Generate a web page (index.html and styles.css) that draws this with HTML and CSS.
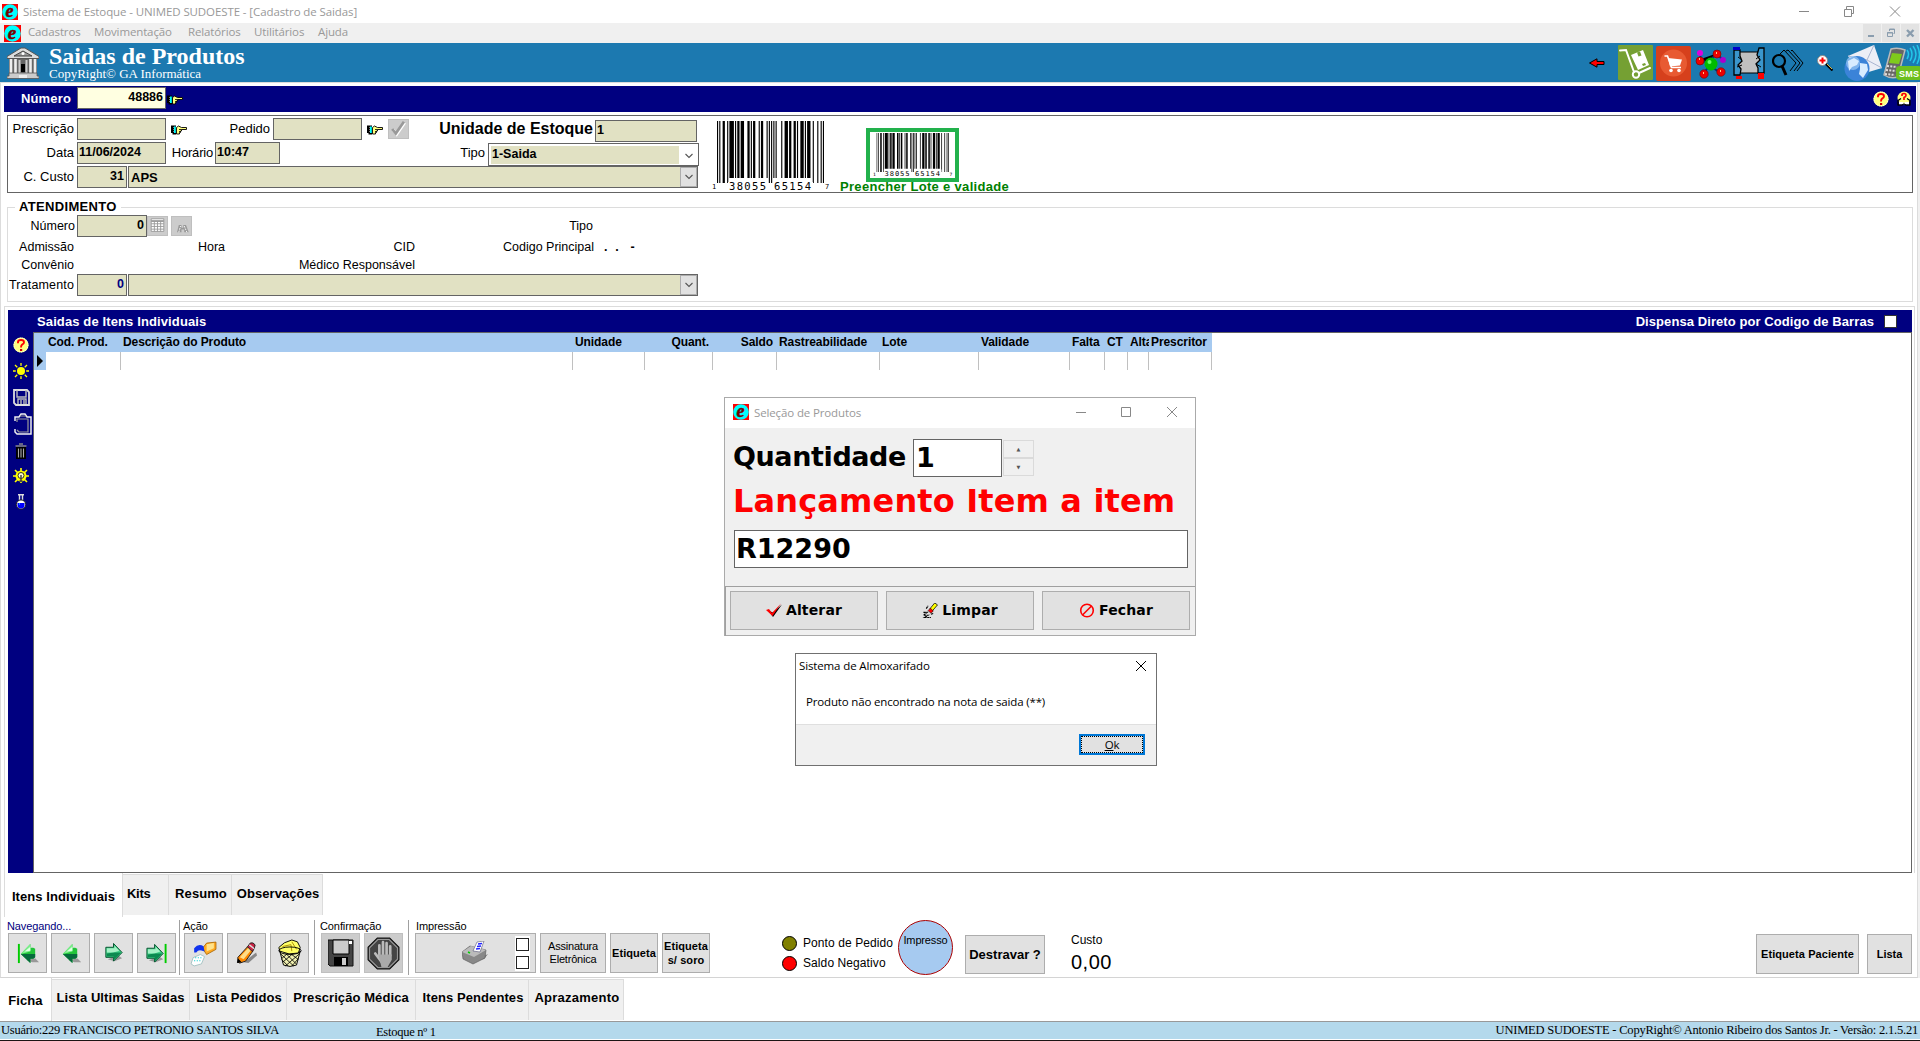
FILE: index.html
```html
<!DOCTYPE html>
<html lang="pt-BR">
<head>
<meta charset="utf-8">
<title>Sistema de Estoque</title>
<link rel="stylesheet" href="styles.css">
</head>
<body>
<svg class="defs" width="0" height="0">
  <symbol id="hand" viewBox="0 0 16 10"><path d="M0 .5h5v9H1.500V8H0z"/><path d="M2.500 2v6" stroke="#777" stroke-dasharray="1 1"/><path d="M3 1.500h1.800v6.500H3z" fill="#0ff"/><path d="M5.500 2.500l2-1.500 3 1.500h5v2h-5v1.500h-1v1.500h-1v1.500h-3z" fill="#ffff80" stroke="#000" stroke-width=".9"/><path d="M8 4.500h2.500M8 6.500h1.500" stroke="#000" stroke-width=".8"/></symbol>
  <symbol id="help" viewBox="0 0 16 16"><circle cx="8" cy="8" r="7.600" fill="#ffff80"/><circle cx="8" cy="8" r="7" fill="none" stroke="#fff" stroke-dasharray="1 1"/><path d="M5 6.300V5q0-2 3-2t3 2.200q0 1.500-1.600 2.200Q8 8.200 8 10.500" fill="none" stroke="#f00" stroke-width="1.900"/><rect x="7" y="12" width="2.200" height="2" fill="#c00"/></symbol>
  <symbol id="down" viewBox="0 0 10 6"><path d="M1.500 1l3.500 3.500L8.500 1" fill="none" stroke="#555" stroke-width="1.100"/></symbol>
  <symbol id="bars" viewBox="0 0 95 62" preserveAspectRatio="none"><path d="M0 0h1v62h-1zM2 0h1v62h-1zM5 0h2v62h-2zM9 0h1v62h-1zM11 0h4v57h-4zM16 0h1v57h-1zM18 0h2v57h-2zM21 0h3v57h-3zM27 0h2v57h-2zM30 0h1v57h-1zM32 0h2v57h-2zM37 0h1v57h-1zM39 0h2v57h-2zM44 0h1v57h-1zM46 0h1v62h-1zM48 0h1v62h-1zM50 0h1v57h-1zM52 0h1v57h-1zM57 0h1v57h-1zM60 0h3v57h-3zM64 0h2v57h-2zM68 0h2v57h-2zM71 0h1v57h-1zM74 0h3v57h-3zM78 0h1v57h-1zM80 0h3v57h-3zM85 0h1v62h-1zM89 0h1v62h-1zM92 0h1v62h-1zM94 0h1v62h-1z"/></symbol>
  <symbol id="arrow-l" viewBox="0 0 20 20"><path d="M7 17l6 2h7l-4-4z" fill="#999"/><path d="M1 10.500L11 0v4h3l2 1v9l-2 1.500h-3v4.500z" fill="#22c43a"/><path d="M1 10.500L11 0v8z" fill="#7df08d"/><path d="M1 10.500h15V14l-2 1.500h-3V20z" fill="#066b3c"/><path d="M5 8l6-5v4z" fill="#e0ffe4"/></symbol>
  <symbol id="arrow-r" viewBox="0 0 20 20"><path d="M3 17l7 2 8-3-4-3z" fill="#999"/><path d="M1 4.500h8V.500l9 9.500-9 9v-4H1z" fill="#3fcf86" stroke="#05512e"/><path d="M2 5.500h8V3l5 5-6 2H2z" fill="#a5f2c6"/><path d="M2 11l8-1h7l-8 8v-4H2z" fill="#0b8a50"/></symbol>
</svg>

<header class="titlebar">
  <svg class="i16" viewBox="0 0 16 16"><rect width="16" height="16" fill="#f00"/><circle cx="8" cy="8" r="7.800" fill="#0ff"/><text class="e-mark" x="3.500" y="13">e</text></svg>
  <span class="ui">Sistema de Estoque - UNIMED SUDOESTE - [Cadastro de Saidas]</span>
  <svg class="win-controls" viewBox="0 0 102 12"><path d="M0 6.500h10M45.500 4.500h7v7h-7zM47.500 4.500v-3h7v7h-2M91 1.500l10 10M101 1.500l-10 10" fill="none" stroke="#888"/></svg>
</header>
<nav class="menubar">
  <svg class="i17" viewBox="0 0 16 16"><rect width="16" height="16" fill="#f00"/><circle cx="8" cy="8" r="7.800" fill="#0ff"/><text class="e-mark" x="3.500" y="13">e</text></svg>
  <span class="ui m1">Cadastros</span><span class="ui m2">Movimentação</span><span class="ui m3">Relatórios</span><span class="ui m4">Utilitários</span><span class="ui m5">Ajuda</span>
  <div class="mdi"><svg viewBox="0 0 18 18"><path d="M5 12h6" stroke="#8a9dae" stroke-width="2"/></svg><svg viewBox="0 0 18 18"><path d="M5.500 8.500h5v4h-5zM5 9h6M7.500 7v-2h5v4.500h-1M7 5.500h6" fill="none" stroke="#8a9dae"/></svg><svg viewBox="0 0 18 18"><path d="M6 6l6.500 6.500M12.500 6L6 12.500" stroke="#8a9dae" stroke-width="2.400"/></svg></div>
</nav>
<section class="brand">
  <svg class="bank" viewBox="0 0 32 32"><path d="M0 9.500L14 1h4l14 8.500v2H0z" fill="#ddd" stroke="#555"/><path d="M7 9l9-5 9 5z" fill="#999" stroke="#444"/><circle cx="16" cy="6.500" r="1.500" fill="#fff"/><path d="M2 12h28v15H2z" fill="#666"/><path d="M14 17h4v8h-4z" fill="#000"/><path d="M4 12v15M8.500 12v15M23.500 12v15M28 12v15" stroke="#eee" stroke-width="2.600"/><path d="M12.500 13v13M19.500 13v13" stroke="#ccc" stroke-width="2"/><path d="M2 26h28v3h2v2.500H0V29h2z" fill="#ccc" stroke="#555" stroke-width=".8"/><path d="M12 28h8v3h-8z" fill="#eee"/></svg>
  <div class="brand-text"><h1>Saidas de Produtos</h1><p>CopyRight© GA Informática</p></div>
  <div class="brand-icons">
    <svg class="bi-arrow" viewBox="0 0 16 10"><path d="M.5 5L8 .8v2.700h7v3H8v2.700z" fill="#f00" stroke="#000"/></svg>
    <svg class="bi-truck" viewBox="0 0 35 35"><rect width="35" height="35" rx="1" fill="#75a033"/><path d="M2 5.500l6-.5 8 22M21 28l11-5" fill="none" stroke="#fff" stroke-width="2" stroke-linecap="round"/><circle cx="18" cy="29.500" r="3.200" fill="none" stroke="#fff" stroke-width="2"/><path d="M13 10l12-5 6 15-11 5z" fill="#fff"/><path d="M19 7.500l1.500 4 3-1-1.500-4zM24 19l3-1 1 2-3 1z" fill="#75a033"/></svg>
    <svg class="bi-cart" viewBox="0 0 35 35"><rect width="35" height="35" rx="2" fill="#d6401c"/><circle cx="17.500" cy="17" r="13.500" fill="#e85a32"/><path d="M8.500 10h3l4 11.500h9.500" fill="none" stroke="#fff" stroke-width="1.600"/><path d="M12 12l14 1.500-2 6-10 1z" fill="#fff"/><circle cx="15" cy="24.500" r="1.800" fill="#fff"/><circle cx="23" cy="24.500" r="1.800" fill="#fff"/></svg>
    <svg class="bi-mol" viewBox="0 0 32 30"><path d="M6 10l8 6 6-11M14 16l10 7M14 16l-5 9M5 3l1 9M22 5l6 6" stroke="#003080" stroke-width="2"/><circle cx="16" cy="15" r="6.500" fill="#0b0"/><circle cx="14.500" cy="13" r="2" fill="#6f6"/><g fill="#e00" stroke="#700" stroke-width=".6"><circle cx="5" cy="12" r="4"/><circle cx="22" cy="5" r="4"/><circle cx="9" cy="25" r="4.200"/><circle cx="26" cy="23" r="4.200"/></g><circle cx="5" cy="4" r="3" fill="#d0d"/><circle cx="28" cy="11" r="3" fill="#a0c"/><path d="M4 10h1M21 4h1M8 24h1M25 22h1" stroke="#fc8" stroke-width="2"/></svg>
    <svg class="bi-frame" viewBox="0 0 32 32"><path d="M5 5h22v21H5z" fill="#c0c0c0" stroke="#000"/><path d="M1 3h6v6l2 5-4 4 3 4-1 6H1zM26 1h5v25h-6v-5l-2-4 4-4-3-5z" fill="#3a96cc" stroke="#000" stroke-width="1.300"/><path d="M0 0h7v3H0z" fill="#00c"/><path d="M3 29h6v3H3zM25 26h6v6h-6z" fill="#f00"/><path d="M5 10l4 3M4 20l5-2M27 9l-4 3M28 20l-5-3" stroke="#000"/></svg>
    <svg class="bi-search" viewBox="0 0 32 27"><path d="M8 5l4-4 12 13-6 8M14 2l2-1 12 13-6 8M19 2l1-1 11 13-6 8" fill="none" stroke="#000" stroke-width="1"/><circle cx="7" cy="12" r="6" fill="none" stroke="#000" stroke-width="2.200"/><path d="M10 17l4 9" stroke="#000" stroke-width="3"/></svg>
    <svg class="bi-zoom" viewBox="0 0 16 16"><circle cx="5.500" cy="5.500" r="5" fill="#fff" stroke="#888"/><path d="M5.500 2.500v6M2.500 5.500h6" stroke="#f00" stroke-width="2"/><path d="M9 9l6.500 6.500" stroke="#000" stroke-width="2.200"/><path d="M10 9l5 5" stroke="#db4" stroke-width="1"/></svg>
    <svg class="bi-mail" viewBox="0 0 38 36"><path d="M4 11L30 0l8 23-20 6z" fill="#eceef6"/><path d="M4 11l19 4L30 0M23 15l15 8" fill="none" stroke="#a9b4d0"/><circle cx="13" cy="23.500" r="12.500" fill="#3b83d8"/><circle cx="9" cy="18" r="7" fill="#9cc9f6" opacity=".7"/><path d="M4 16l6-3 5 3-2 4-5 2-3 4zM16 18l7 1 1 6-5 8-4-4 1-5z" fill="#d8ecff"/></svg>
    <svg class="bi-sms" viewBox="0 0 38 36"><path d="M9 4q7-2 14 1l-7 27q-8 2-14-2z" fill="#666" stroke="#bbb" stroke-width="1.500"/><path d="M10 8l10 1-3 10-10-1z" fill="#7fcb1c"/><path d="M5 21l10 1M4 25l10 1M3 29l10 1" stroke="#ddd" stroke-width="2" stroke-dasharray="2 1.300"/><path d="M25 5q3 4 0 9M28 3q4 6 0 13M31 1q6 8 0 17M35 0q5 10 0 19" fill="none" stroke="#23c6e8" stroke-width="1.500"/><rect x="14" y="21" width="26" height="14" rx="4" fill="#6cc01e"/><text class="sms" x="17" y="32" textLength="20">SMS</text></svg>
  </div>
</section>

<main class="page">
  <div class="number-bar">
    <label class="lbl">Número</label>
    <div class="inp cream num">48886</div>
    <svg class="hand"><use href="#hand"/></svg>
    <svg class="i16 help-a"><use href="#help"/></svg>
    <svg class="i16 help-b" viewBox="0 0 16 16"><circle cx="8" cy="7" r="6.500" fill="#ffff80"/><path d="M2 14.500v-5l3-2M14 14.500v-5l-3-2M2 14h4l2-1.500 2 1.500h4" fill="none" stroke="#000" stroke-width="1.400"/><path d="M3 11h4l1 1 1-1h4v2.200h-3l-2-1-2 1H3z" fill="#fff"/><path d="M6 5V4q0-1.500 2-1.500T10 4.300Q10 6 8 6.500V9" fill="none" stroke="#f00" stroke-width="1.700"/></svg>
  </div>

  <section class="box">
    <div class="fields">
      <div class="row">
        <label class="lbl first">Prescrição</label><div class="inp w89"></div><svg class="hand h2"><use href="#hand"/></svg>
        <label class="lbl pedido">Pedido</label><div class="inp w89 after"></div><svg class="hand h2"><use href="#hand"/></svg>
        <div class="gbtn check"><svg viewBox="0 0 20 20"><path d="M4 11l4 5 9-13" fill="none" stroke="#fff" stroke-width="3"/><path d="M3 10l4 5 9-13" fill="none" stroke="#999" stroke-width="3"/></svg></div>
        <label class="lbl unidade">Unidade de Estoque</label><div class="inp w102">1</div>
      </div>
      <div class="row">
        <label class="lbl first">Data</label><div class="inp w89">11/06/2024</div>
        <label class="lbl horario">Horário</label><div class="inp w65">10:47</div>
        <label class="lbl tipo">Tipo</label>
        <div class="select"><span>1-Saida</span><svg><use href="#down"/></svg></div>
      </div>
      <div class="row">
        <label class="lbl first">C. Custo</label><div class="inp w50 num">31</div>
        <div class="inp combo"><span>APS</span><i><svg><use href="#down"/></svg></i></div>
      </div>
    </div>
    <svg class="barcode" viewBox="0 0 118 70"><use href="#bars" x="5" y="0" width="107" height="62"/><g class="digits"><rect x="16" y="61" width="40" height="9" fill="#fff"/><rect x="62" y="61" width="39" height="9" fill="#fff"/><text class="tiny" x="0" y="68">1</text><text x="17" y="69" textLength="37">38055</text><text x="62" y="69" textLength="37">65154</text><text class="tiny" x="113" y="68">7</text></g></svg>
    <div class="preencher">
      <div class="green"><svg viewBox="0 0 118 70" preserveAspectRatio="none"><use href="#bars" x="5" y="0" width="107" height="62"/><g class="digits"><rect x="16" y="58" width="40" height="12" fill="#fff"/><rect x="62" y="58" width="39" height="12" fill="#fff"/><text class="tiny" x="0" y="68">1</text><text x="17" y="69" textLength="37">38055</text><text x="62" y="69" textLength="37">65154</text><text class="tiny" x="113" y="68">7</text></g></svg></div>
      <span>Preencher Lote e validade</span>
    </div>
  </section>

  <section class="group">
    <h2 class="legend"><span>ATENDIMENTO</span></h2>
    <div class="row">
      <label class="lbl first">Número</label><div class="inp w70 num">0</div>
      <div class="gbtn"><svg viewBox="0 0 20 20"><path d="M3 2h14v14H3z" fill="#fff" stroke="#999"/><path d="M3 4.500h14" stroke="#999" stroke-width="2"/><path d="M3 7.500h14M3 10.500h14M3 13.500h14M6.500 5v11M10 5v11M13.500 5v11" stroke="#999"/></svg></div>
      <div class="gbtn bino"><svg viewBox="0 0 20 20"><path d="M5 17l2-8h3v3h2V9h3l3 8h-5v-3h-3v3z" fill="#999"/><path d="M7 17l2-7M13 10l3 7" stroke="#fff" stroke-dasharray="2 1"/></svg></div>
      <label class="lbl g-tipo">Tipo</label>
    </div>
    <div class="trow r1"><label class="lbl first">Admissão</label><label class="lbl g-hora">Hora</label><label class="lbl g-cid">CID</label><label class="lbl g-cod">Codigo Principal</label><span class="dots">.&nbsp; .&nbsp;&nbsp; -</span></div>
    <div class="trow"><label class="lbl first">Convênio</label><label class="lbl g-med">Médico Responsável</label></div>
    <div class="row"><label class="lbl first trat">Tratamento</label><div class="inp w50 num navy">0</div><div class="inp combo"><span></span><i><svg><use href="#down"/></svg></i></div></div>
  </section>

  <section class="items">
    <div class="items-head"><b>Saidas de Itens Individuais</b><b class="disp">Dispensa Direto por Codigo de Barras</b><i class="cb"></i></div>
    <div class="items-body">
      <aside class="side">
        <svg class="i16"><use href="#help"/></svg>
        <svg class="i16 s2" viewBox="0 0 16 16"><path d="M8 0v16M0 8h16M2 2l12 12M14 2L2 14" stroke="#ff0" stroke-width="1.300"/><circle cx="8" cy="8" r="5.300" fill="#000080"/><circle cx="8" cy="8" r="4" fill="#ff0"/></svg>
        <svg class="i17 s3" viewBox="0 0 17 17"><path d="M1 1h13l2 2v13H3l-2-2z" fill="none" stroke="#ddd" stroke-width="1.800"/><path d="M4 1v7h9V1M5 15v-5h8v5M8 11v4M11 11v4" fill="none" stroke="#bbb" stroke-width="1.400"/></svg>
        <svg class="s4" viewBox="0 0 19 23"><path d="M1 8V4h4l2-3h4l2 3h4v17H3l-2-2v-3" fill="none" stroke="#eee" stroke-width="1.500"/><path d="M3 9V6h11v13H5l-2-2M6 3h6" fill="none" stroke="#999" stroke-width="1.200"/></svg>
        <svg class="i16 s5" viewBox="0 0 16 16"><path d="M3 4h10v12H3z" fill="#000"/><path d="M2.500 3h11M6 1h4" stroke="#888" stroke-width="1.500"/><path d="M5.500 5.500v9M8 5.500v9M10.500 5.500v9" stroke="#aaa" stroke-width="1.100"/></svg>
        <svg class="i16 s6" viewBox="0 0 16 16"><path d="M8 0v15M0 8h16M2 2l12 12M14 2L2 14" stroke="#ff0" stroke-width="1.600"/><circle cx="8" cy="8" r="5.500" fill="#ff0"/><circle cx="8" cy="7.500" r="3" fill="#ffc" stroke="#000" stroke-width=".8"/><path d="M8 7v7M6.500 13h3" stroke="#444" stroke-width="1.500"/></svg>
        <svg class="i16 s7" viewBox="0 0 16 16"><path d="M5 .700h6M6.500 1v5M9.500 1v5" stroke="#ddd" stroke-width="1.400"/><circle cx="8" cy="10.500" r="4.600" fill="#fff" stroke="#222"/><path d="M4.500 9h7v2a3.500 3.500 0 0 1-7 0z" fill="#00f"/><path d="M6 10h1" stroke="#0ff"/></svg>
      </aside>
      <div class="grid">
        <div class="gr gh"><span></span><span>Cod. Prod.</span><span>Descrição do Produto</span><span>Unidade</span><span class="r">Quant.</span><span class="r">Saldo</span><span>Rastreabilidade</span><span>Lote</span><span>Validade</span><span>Falta</span><span>CT</span><span>Alta</span><span>Prescritor</span></div>
        <div class="gr gb"><span><svg viewBox="0 0 12 18"><path d="M3 3l6 6-6 6z"/></svg></span><span></span><span></span><span></span><span></span><span></span><span></span><span></span><span></span><span></span><span></span><span></span><span></span></div>
      </div>
    </div>
  </section>

  <div class="tabs tabs-in"><b class="on"><span>Itens Individuais</span></b><b class="k"><span>Kits</span></b><b class="re"><span>Resumo</span></b><b class="ob"><span>Observações</span></b></div>

  <section class="tools">
    <div class="tg g1"><h3 class="navy">Navegando...</h3><div class="bs">
      <button><svg viewBox="0 0 24 24"><path d="M3 2v20" stroke="#0c0" stroke-width="2"/><use href="#arrow-l" x="4" y="2" width="20" height="20"/></svg></button>
      <button><svg viewBox="0 0 24 24"><use href="#arrow-l" x="3" y="2" width="20" height="20"/></svg></button>
      <button><svg viewBox="0 0 24 24"><use href="#arrow-r" x="3" y="1" width="20" height="20"/></svg></button>
      <button><svg viewBox="0 0 24 24"><use href="#arrow-r" x="1" y="2" width="20" height="20"/><path d="M21.500 2v20" stroke="#0c0" stroke-width="2"/></svg></button>
    </div></div>
    <div class="tg g2"><h3>Ação</h3><div class="bs">
      <button><svg class="big" viewBox="0 0 26 26"><path d="M12 8l4-5 9-1v7l-9 5z" fill="#fa2" stroke="#a60" stroke-width=".8"/><path d="M16 4l7-1v5l-7 3z" fill="#ffe28a"/><path d="M4 12V8q4-5 9-2l1 5-3-1q-3-1-5 2z" fill="#13e"/><path d="M1 23l2-6 7-3 4 2-3 7-7 2z" fill="#fff" stroke="#9bb" stroke-width=".8"/><path d="M4 20h6M5 17h6" stroke="#0cc" stroke-dasharray="1 1.500"/></svg></button>
      <button><svg viewBox="0 0 24 24"><path d="M9 21l13-10 1 3-9 8z" fill="#888"/><path d="M3 16L13 5l6 4-8 11-6 2-2-1z" fill="#f80" stroke="#222"/><path d="M5 16L14 6l3 2-8 10z" fill="#fd8"/><path d="M13 5l3-4q3-1 5 2l-1 4-2 3z" fill="#c24" stroke="#222"/><path d="M15 3l5 4" stroke="#ddd" stroke-width="1.500"/><path d="M3 17l-1 5 5-1z" fill="#000"/></svg></button>
      <button><svg class="basket" viewBox="0 0 28 30"><path d="M3 13h22l-4 15q-7 3-14 0z" fill="#f0f0b0" stroke="#000"/><path d="M4 16l14 13M5 22l7 7M9 15l12 12M15 16l8 6M24 16L9 29M23 21l-7 8M18 15L6 25M12 15l-7 6" stroke="#000" stroke-width=".9"/><path d="M2 9l6-5 8-3 6 2 3 6-2 6-10 1L3 13z" fill="#ff6" stroke="#000"/><path d="M6 8l9-2 1 7M16 3l5 8" fill="none" stroke="#a80"/><ellipse cx="14" cy="12.500" rx="12" ry="4" fill="none" stroke="#000"/></svg></button>
    </div></div>
    <div class="tg g3"><h3>Confirmação</h3><div class="bs">
      <button class="off"><svg viewBox="0 0 26 28"><path d="M0 1h25v26H2l-2-2z" fill="#444" stroke="#111"/><path d="M5 1h16v14H5z" fill="#ccc" stroke="#000"/><path d="M6 18h14v9H6z" fill="#000"/><path d="M14 19h4v7h-4z" fill="#ccc"/><path d="M21 2h3v3h-3z" fill="#fff"/></svg></button>
      <button class="off"><svg class="stop" viewBox="0 0 32 32"><path d="M10 1h12l9 9v12l-9 9H10l-9-9V10z" fill="#444" stroke="#111"/><path d="M10.500 2.500h11l8 8v11l-8 8h-11l-8-8v-11z" fill="none" stroke="#999"/><path d="M12 19V8M15.500 17V5M19 17V6M22.500 18V9M8 16l6 8" stroke="#bbb" stroke-width="2.600" stroke-linecap="round"/><path d="M11 17h13v5l-4 7h-6z" fill="#aaa"/></svg></button>
    </div></div>
    <div class="tg g4"><h3>Impressão</h3><div class="bs">
      <button class="print"><svg viewBox="0 0 26 24"><path d="M11 20l11-2 4-5-4 2z" fill="#777"/><path d="M0 11l8-6 16 4-1 8-12 6-10-5z" fill="#888" stroke="#555" stroke-width=".6"/><path d="M0 11l12 5 12-7-15-4z" fill="#bbb"/><path d="M11 10l4-9 7-1-4 11z" fill="#fff" stroke="#557" stroke-width=".6"/><path d="M14 8l4-.500M15 5.500l4-.500M16 3l4-.500" stroke="#22f" stroke-width="1.300"/><path d="M6 11l2 1" stroke="#0c0" stroke-width="1.500"/></svg><span class="cbs"><i></i><i></i></span></button>
      <button class="assin"><span>Assinatura<br>Eletrônica</span></button>
      <button class="etq"><b>Etiqueta</b></button>
      <button class="etq"><b>Etiqueta<br>s/ soro</b></button>
    </div></div>
    <ul class="legend-list"><li><i class="olive"></i><span>Ponto de Pedido</span></li><li><i class="red"></i><span>Saldo Negativo</span></li></ul>
    <div class="impresso"><span>Impresso</span></div>
    <button class="destravar"><b>Destravar ?</b></button>
    <div class="custo"><span>Custo</span><strong>0,00</strong></div>
    <button class="pac"><b>Etiqueta Paciente</b></button>
    <button class="lista"><b>Lista</b></button>
  </section>
</main>

<div class="tabs tabs-out"><b class="on"><span>Ficha</span></b><b class="o1"><span>Lista Ultimas Saidas</span></b><b class="o2"><span>Lista Pedidos</span></b><b class="o3"><span>Prescrição Médica</span></b><b class="o4"><span>Itens Pendentes</span></b><b class="o5"><span>Aprazamento</span></b></div>
<footer class="status"><span>Usuário:229 FRANCISCO PETRONIO SANTOS SILVA</span><span class="est">Estoque nº 1</span><span class="ver">UNIMED SUDOESTE - CopyRight© Antonio Ribeiro dos Santos Jr. - Versão: 2.1.5.21</span></footer>

<section class="dialog sel">
  <header><svg class="i16" viewBox="0 0 16 16"><rect width="16" height="16" fill="#f00"/><circle cx="8" cy="8" r="7.800" fill="#0ff"/><text class="e-mark" x="3.500" y="13">e</text></svg><span class="ui">Seleção de Produtos</span><svg class="dlg-controls" viewBox="0 0 102 12"><path d="M0 6.500h10M45.500 1.500h9v9h-9zM91 1l10 10M101 1l-10 10" fill="none" stroke="#888"/></svg></header>
  <div class="qrow"><span>Quantidade</span><div class="field q">1</div><div class="spin"><i>▲</i><i>▼</i></div></div>
  <p class="red-line">Lançamento Item a item</p>
  <div class="field code">R12290</div>
  <div class="dlg-buttons">
    <button><svg viewBox="0 0 16 14"><path d="M2 7l5 6.500L16 1 7 9z" fill="#000"/><path d="M0 6.500l3-1 3 4L15 0 6.500 12.500z" fill="#f00"/></svg><b>Alterar</b></button>
    <button><svg viewBox="0 0 16 16"><path d="M8 6l5-6 3 2-6 7z" fill="#ff0" stroke="#000" stroke-width=".8"/><path d="M6 8l2.500-2.500 3 3L9 11z" fill="#f00" stroke="#000" stroke-width=".6"/><path d="M1 10h4l-4 3h5l-4 2.500h7M4 6l2-3M9 12l3-1" fill="none" stroke="#000" stroke-width="1.200" stroke-dasharray="2.500 .6"/></svg><b>Limpar</b></button>
    <button><svg viewBox="0 0 16 16"><circle cx="8" cy="8" r="6.700" fill="none" stroke="#f00" stroke-width="1.700"/><path d="M3.500 12.500l9-9" stroke="#f00" stroke-width="1.700"/></svg><b>Fechar</b></button>
  </div>
</section>

<section class="dialog msg">
  <header><span class="ui">Sistema de Almoxarifado</span><svg viewBox="0 0 12 12"><path d="M1 1l10 10M11 1L1 11" stroke="#000"/></svg></header>
  <p class="ui">Produto não encontrado na nota de saida (**)</p>
  <footer><button class="ui"><span><u>O</u>k</span></button></footer>
</section>
</body>
</html>
```
FILE: styles.css
```css
* { box-sizing: border-box; }
body { margin: 0; width: 1920px; height: 1041px; overflow: hidden; background: #fff; color: #000; font: 13px/15px "Liberation Sans", Arial, sans-serif; display: flex; flex-direction: column; position: relative; }
h1, h2, h3, p, ul { margin: 0; padding: 0; list-style: none; font-weight: normal; }
i { font-style: normal; }
svg { display: block; flex: none; }
.defs { position: absolute; }
span, label, b { white-space: nowrap; }
.ui { font-family: "Open Sans", "Noto Sans", sans-serif; font-size: 11.5px; letter-spacing: -.13px; }
.i16 { width: 16px; height: 16px; }
.i17 { width: 17px; height: 17px; }
.e-mark { font: italic bold 18px "Liberation Serif", serif; fill: #700; stroke: #700; stroke-width: .5px; }
.sms { font: bold 9px "Liberation Sans", sans-serif; fill: #fff; }
.digits { font: 10.500px "DejaVu Sans Mono", monospace; }
.tiny { font-size: 7px; }
button { background: #e1e1e1; border: 1px solid #adadad; padding: 0; font: inherit; color: #000; display: flex; align-items: center; justify-content: center; flex: none; }

.titlebar { height: 23px; display: flex; align-items: center; padding-left: 2px; color: #999; }
.titlebar .ui { margin-left: 5px; letter-spacing: -.1px; }
.win-controls { width: 102px; height: 12px; margin: -2px 19px 0 auto; }
.menubar { height: 20px; background: #f0f0f0; display: flex; align-items: center; padding-left: 4px; color: #999; }
.menubar span { line-height: 18px; height: 20px; }
.m1 { width: 52px; margin-left: 7px; }
.m2 { width: 80px; margin-left: 14px; }
.m3 { width: 52px; margin-left: 14px; }
.m4 { width: 50px; margin-left: 14px; }
.m5 { margin-left: 14px; }
.mdi { margin-left: auto; display: flex; gap: 1px; margin-right: 1px; }
.mdi svg { width: 18px; height: 18px; background: #e3e3e3; }
.brand { height: 39px; background: #1c79b0; display: flex; color: #fff; font-family: "Liberation Serif", serif; }
.bank { width: 32px; height: 32px; margin: 4px 0 0 7px; }
.brand-text { margin-left: 10px; }
.brand h1 { font-size: 24px; line-height: 27px; font-weight: bold; height: 24px; }
.brand p { font-size: 13px; line-height: 14px; }
.brand-icons { margin-left: auto; display: flex; align-items: flex-start; padding-top: 2px; }
.bi-arrow { width: 16px; height: 10px; margin: 13px 13px 0 0; }
.bi-truck { width: 35px; height: 35px; margin-right: 3px; }
.bi-cart { width: 35px; height: 35px; margin: 1px 4px 0 0; }
.bi-mol { width: 32px; height: 30px; margin: 4px 6px 0 0; }
.bi-frame { width: 32px; height: 32px; margin: 2px 7px 0 0; }
.bi-search { width: 32px; height: 27px; margin: 4px 13px 0 0; }
.bi-zoom { width: 16px; height: 16px; margin: 10px 11px 0 0; }
.bi-mail { width: 38px; height: 36px; }
.bi-sms { width: 38px; height: 36px; }

.page { height: 896px; width: 1918px; border: 1px solid #dcdcdc; border-bottom-color: #d4d4d4; display: flex; flex-direction: column; box-shadow: 2px 0 0 #f0f0f0; }
.number-bar { margin: 3px 0 0 3px; width: 1912px; height: 26px; flex: none; background: #000080; display: flex; align-items: flex-start; padding-top: 1px; }
.lbl { line-height: 22px; text-align: right; flex: none; }
.number-bar .lbl { width: 67px; margin-right: 6px; line-height: 23px; color: #fff; font-weight: bold; letter-spacing: .15px; }
.inp { height: 22px; border: 1px solid #646464; background: #e1e1c3; font-weight: bold; font-size: 12.5px; line-height: 19px; padding: 0 2px 0 1px; margin-left: 2px; flex: none; white-space: nowrap; }
.number-bar .inp { width: 89px; margin: 0; }
.inp.cream { background: #ffffe1; }
.num { text-align: right; }
.navy { color: #000080; }
.hand { width: 16px; height: 10px; margin: 8px 0 0 1px; }
.help-a { margin: 4px 7px 0 auto; }
.help-b { margin: 4px 4px 0 0; }

.box { margin: 3px 0 0 6px; width: 1906px; height: 78px; flex: none; border: 1px solid #646464; display: flex; }
.fields { width: 692px; padding-top: 2px; flex: none; display: flex; flex-direction: column; gap: 2px; }
.row { display: flex; height: 22px; align-items: flex-start; }
.first { width: 67px; }
.box .first { padding-right: 1px; }
.w89 { width: 89px; }
.w50 { width: 50px; }
.w65 { width: 65px; }
.w70 { width: 70px; }
.inp.after { margin-left: 3px; }
.w102 { width: 102px; margin-top: 2px; }
.hand.h2 { margin: 7px 0 0 5px; }
.pedido { width: 83px; }
.gbtn { width: 21px; height: 20px; background: #ccc; border: 1px solid #bfbfbf; margin-top: 1px; flex: none; }
.gbtn svg { width: 19px; height: 18px; }
.check { margin-left: 5px; }
.unidade { width: 184px; font-size: 16px; font-weight: bold; }
.horario { width: 47px; letter-spacing: -.2px; }
.tipo { width: 206px; padding-right: 1px; }
.select { margin: 1px 0 0 2px; width: 211px; height: 23px; border: 1px solid #646464; padding: 2px; display: flex; font-weight: bold; font-size: 12.5px; }
.select span { background: #e1e1c3; width: 188px; line-height: 16px; height: 18px; padding-left: 1px; }
.select svg { width: 10px; height: 6px; margin: 7px 0 0 5px; }
.combo { width: 570px; margin-left: 1px; padding: 0 0 0 2px; display: flex; line-height: 21px; font-size: 13px; }
.combo span { flex: 1; }
.combo i { width: 17px; height: 20px; border: 1px solid #adadad; background: #e1e1e1; }
.combo svg { width: 10px; height: 6px; margin: 6px 0 0 3px; }
.barcode { width: 118px; height: 70px; margin: 5px 0 0 12px; }
.preencher { width: 170px; margin: 12px 0 0 10px; display: flex; flex-direction: column; align-items: flex-start; }
.green { width: 93px; height: 54px; border: 4px solid #22b14c; margin-left: 26px; padding: 1px 3px; flex: none; background: #fff; position: relative; z-index: 1; }
.green svg { width: 80px; height: 44px; }
.preencher span { color: #008000; font-weight: bold; line-height: 14px; margin-top: -2px; letter-spacing: .32px; }

.group { margin: 14px 0 0 6px; width: 1906px; height: 95px; flex: none; border: 1px solid #dcdcdc; font-size: 12.5px; }
.legend { height: 7px; font-weight: bold; font-size: 13px; padding-left: 7px; letter-spacing: .33px; }
.legend span { background: #fff; display: inline-block; padding: 0 4px; line-height: 16px; position: relative; top: -9px; }
.bino { margin-left: 3px; }
.g-tipo { width: 401px; }
.trow { display: flex; height: 18px; }
.trow .lbl { line-height: 18px; padding-right: 1px; }
.r1 { height: 19px; }
.r1 .lbl { line-height: 20px; }
.trat { letter-spacing: .15px; padding-right: 1px; }
.g-hora { width: 151px; }
.g-cid { width: 190px; }
.g-cod { width: 179px; }
.g-med { width: 341px; }
.dots { margin-left: 9px; line-height: 21px; font-weight: bold; letter-spacing: .3px; }

.items { margin: 4px 0 0 3px; width: 1911px; height: 567px; flex: none; border: 1px solid #dcdcdc; border-bottom: 0; padding: 3px 0 0 3px; }
.items-head { width: 1904px; height: 22px; background: #000080; color: #fff; display: flex; align-items: center; padding-left: 29px; letter-spacing: .12px; }
.disp { margin-left: auto; letter-spacing: .08px; }
.cb { width: 13px; height: 13px; background: #fff; border: 1px solid #333; margin: 0 15px 0 10px; }
.items-body { display: flex; height: 541px; }
.side { width: 25px; background: #000080; padding: 5px 0 0 5px; }
.s2 { margin-top: 10px; }
.s3 { margin-top: 10px; }
.s4 { width: 19px; height: 23px; margin: 7px 0 0 1px; }
.s5 { margin-top: 7px; }
.s6 { margin-top: 9px; }
.s7 { margin-top: 10px; }
.grid { width: 1879px; border: 1px solid #646464; }
.gr { display: grid; grid-template-columns: 12px 75px 452px 72px 68px 64px 103px 99px 91px 35px 23px 21px 63px; width: 1178px; }
.gh { background: #a6caf0; height: 19px; font-weight: bold; font-size: 12px; line-height: 19px; letter-spacing: -.08px; }
.gh span { overflow: hidden; padding-left: 2px; }
.gh .r { text-align: right; padding-right: 4px; }
.gb { height: 18px; }
.gb span { border-right: 1px solid #c0c0c0; }
.gb span:first-child { background: #a6caf0; border: 0; }
.gb svg { width: 12px; height: 18px; }

.tabs { display: flex; flex: none; align-items: flex-start; letter-spacing: .08px; }
.tabs b { display: flex; align-items: center; justify-content: center; background: #f0f0f0; border: 1px solid #dcdcdc; border-width: 1px 1px 0 0; height: 41px; margin-top: 1px; flex: none; }
.tabs .on { background: #fff; border-top: 0; height: 44px; margin-top: 0; }
.tabs-in { height: 44px; margin-left: 3px; }
.tabs-in .on { width: 119px; border-left: 1px solid #dcdcdc; padding-top: 2px; }
.tabs b.k { width: 46px; justify-content: flex-start; padding-left: 4px; letter-spacing: -.3px; }
.re { width: 63px; }
.ob { width: 91px; }
.tabs-in .re, .tabs-in .ob { padding-left: 2px; }
.tabs-in b:not(.on) span { margin-top: -3px; }
.tabs-out { height: 43px; }
.tabs-out .on { width: 52px; padding-top: 1px; }
.o1 { width: 138px; }
.o2 { width: 97px; }
.o3 { width: 129px; }
.o4 { width: 113px; }
.o5 { width: 95px; letter-spacing: .25px; }
.tabs-out .o2, .tabs-out .o4, .tabs-out .o5 { padding-left: 2px; }
.tabs-out b:not(.on) span { margin-top: -5px; }

.tools { height: 60px; display: flex; align-items: flex-start; padding: 2px 0 0 4px; }
.tg { height: 55px; margin-top: 1px; border-right: 1px solid #a0a0a0; flex: none; }
.tg h3 { font-size: 11px; line-height: 12px; height: 13px; padding-left: 2px; letter-spacing: -.1px; }
.bs { display: flex; gap: 4px; padding-left: 3px; }
.bs button { width: 39px; height: 40px; }
.bs svg { width: 23px; height: 23px; }
.bs svg.big { width: 27px; height: 27px; }
.bs svg.basket { width: 26px; height: 30px; }
.bs .off { background: #ccc; border-color: #bfbfbf; }
.bs .off svg { width: 26px; height: 28px; }
.bs .off svg.stop { width: 33px; height: 33px; }
.g1 { width: 175px; }
.g2 { width: 135px; }
.g3 { width: 94px; }
.g4 { border: 0; width: 302px; }
.g2 h3 { padding-left: 3px; }
.g2 .bs { padding-left: 4px; }
.g3 h3 { padding-left: 5px; }
.g3 .bs { padding-left: 6px; }
.g4 h3 { padding-left: 7px; }
.g4 .bs { padding-left: 6px; }
.bs .print { width: 121px; justify-content: flex-end; padding-right: 5px; }
.bs .print svg { width: 26px; height: 24px; margin-right: 27px; }
.cbs { background: #fff; display: flex; flex-direction: column; gap: 5px; padding: 2px 1px; }
.cbs i { width: 13px; height: 13px; border: 1px solid #222; }
.bs .assin { width: 66px; font-size: 11px; line-height: 13px; letter-spacing: -.2px; }
.bs .etq { width: 48px; font-size: 11px; line-height: 14px; text-align: center; letter-spacing: .08px; }
.legend-list { margin: 17px 0 0 71px; font-size: 12px; letter-spacing: .09px; }
.legend-list li { display: flex; height: 20px; align-items: flex-start; line-height: 14px; }
.legend-list i { width: 15px; height: 15px; border: 1px solid #000; border-radius: 50%; margin-right: 6px; }
.olive { background: #808000; }
.red { background: #f00; }
.legend-list span { width: 90px; }
.impresso { margin: 1px 0 0 5px; width: 55px; height: 55px; border-radius: 50%; border: 1px solid #a00; background: #a6caf0; text-align: center; font-size: 11px; letter-spacing: -.15px; padding-top: 12px; }
.destravar { width: 80px; height: 39px; margin: 16px 0 0 12px; }
.custo { margin: 14px 0 0 26px; display: flex; flex-direction: column; font-size: 12px; }
.custo strong { font-size: 20px; font-weight: normal; line-height: 22px; margin-top: 3px; letter-spacing: .5px; }
.pac { width: 103px; height: 40px; margin: 15px 8px 0 auto; font-size: 11px; letter-spacing: .08px; }
.lista { width: 45px; height: 40px; margin: 15px 5px 0 0; font-size: 11px; }

.status { height: 20px; border-top: 1px solid #999; border-bottom: 1px solid #1c1414; background: #b4d9ec; display: flex; font: 12.5px/16px "Liberation Serif", serif; padding: 0 2px 0 1px; box-shadow: inset 0 -1px 0 #fff; letter-spacing: -.25px; }
.est { margin-left: 97px; line-height: 21px; }
.ver { margin-left: auto; letter-spacing: -.21px; }

.dialog { position: absolute; background: #f0f0f0; font-family: "DejaVu Sans", Verdana, sans-serif; font-weight: bold; }
.dialog header { display: flex; background: #fff; font-weight: normal; align-items: center; }
.sel { left: 724px; top: 397px; width: 472px; height: 239px; border: 1px solid #aaa; }
.sel header { height: 30px; padding: 0 0 2px 8px; color: #999; }
.sel header span { margin-left: 5px; }
.dlg-controls { width: 102px; height: 12px; margin: 0 17px 0 auto; }
.qrow { display: flex; padding: 11px 0 0 8px; height: 49px; font-size: 27px; line-height: 36px; }
.qrow > span { width: 173px; margin-right: 7px; letter-spacing: -.4px; }
.field { background: #fff; border: 1px solid #646464; height: 38px; padding-left: 2px; line-height: 36px; font-size: 27px; }
.q { width: 89px; }
.spin { width: 31px; margin: 1px 0 0 1px; }
.spin i { display: block; height: 18px; border: 1px solid #dadada; font-size: 5px; line-height: 16px; text-align: center; color: #555; }
.red-line { color: #f00; font-size: 32px; line-height: 48px; height: 53px; padding-left: 8px; font-weight: bold; letter-spacing: .15px; white-space: nowrap; }
.code { margin-left: 9px; width: 454px; padding-left: 1px; line-height: 35px; }
.dlg-buttons { margin-top: 18px; border-top: 1px solid #a0a0a0; border-left: 1px solid #a0a0a0; padding: 4px 0 0 4px; display: flex; gap: 8px; height: 50px; }
.dlg-buttons button { width: 148px; height: 39px; font-size: 14px; gap: 4px; letter-spacing: .15px; }
.dlg-buttons svg { width: 16px; height: 15px; }
.msg { left: 795px; top: 653px; width: 362px; height: 113px; border: 1px solid #707070; font-weight: normal; }
.msg header { height: 26px; padding: 0 9px 3px 3px; justify-content: space-between; }
.msg header svg { width: 12px; height: 12px; }
.msg p { background: #fff; height: 45px; border-bottom: 1px solid #dfdfdf; padding: 14px 0 0 10px; letter-spacing: -.16px; }
.msg footer { padding: 9px 11px 0; display: flex; justify-content: flex-end; }
.msg button { width: 66px; height: 21px; border: 2px solid #0078d7; outline: 1px dotted #000; outline-offset: -3px; }
```
